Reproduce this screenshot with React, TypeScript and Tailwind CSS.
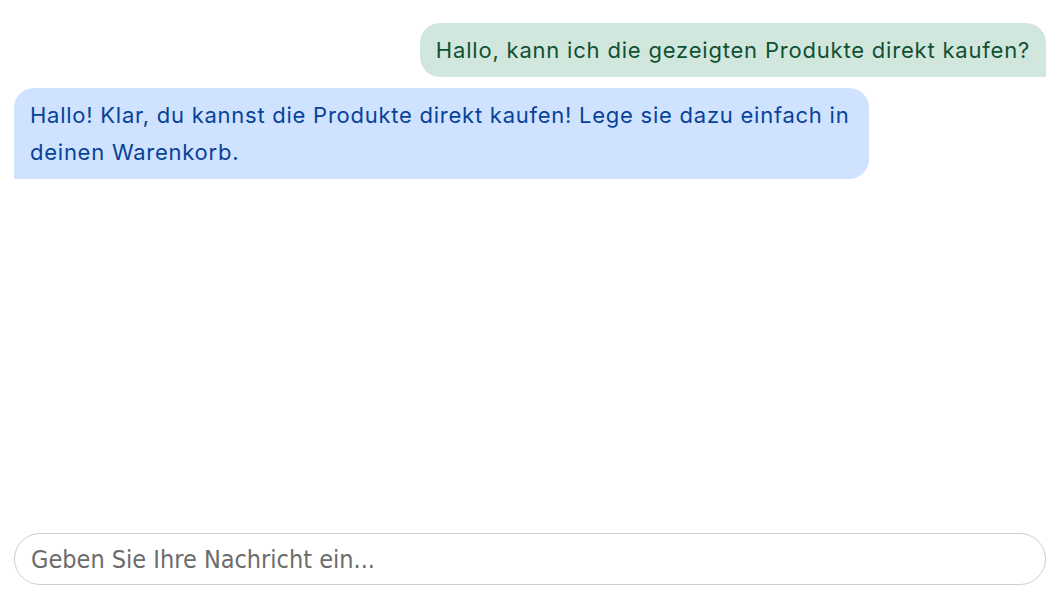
const messages = [
  { id: 1, from: 'user', text: 'Hallo, kann ich die gezeigten Produkte direkt kaufen?' },
  {
    id: 2,
    from: 'bot',
    text: 'Hallo! Klar, du kannst die Produkte direkt kaufen! Lege sie dazu einfach in deinen Warenkorb.',
  },
];

const App = () => {
  return (
    <div className="h-[615px] w-full bg-white flex flex-col pl-[14px] pr-[12px] pt-[23px] pb-[30px] font-['Inter',sans-serif]">
      <div className="flex-1 flex flex-col gap-[11px]">
        {messages.map((m) =>
          m.from === 'user' ? (
            <div key={m.id} className="self-end bg-[#d1e7dd] text-[#0f5132] rounded-[20px] rounded-br-none px-4 pt-[9px] pb-[8px] text-[22px] leading-[37px] tracking-[0.8px]">
              {m.text}
            </div>
          ) : (
            <div key={m.id} className="self-start w-[855px] bg-[#cfe2ff] text-[#084298] rounded-[20px] rounded-bl-none pl-4 pr-[6px] pt-[9px] pb-[8px] text-[22px] leading-[37px] tracking-[0.75px]">
              {m.text}
            </div>
          )
        )}
      </div>
      <input
        type="text"
        placeholder="Geben Sie Ihre Nachricht ein..."
        className="h-[52px] w-full rounded-full border border-[#cfcfcf] px-4 text-[25px] font-['DejaVu_Sans_Condensed','DejaVu_Sans',sans-serif] text-[#333] placeholder:text-[#6c6c6c] outline-none"
      />
    </div>
  );
};

export default App;
